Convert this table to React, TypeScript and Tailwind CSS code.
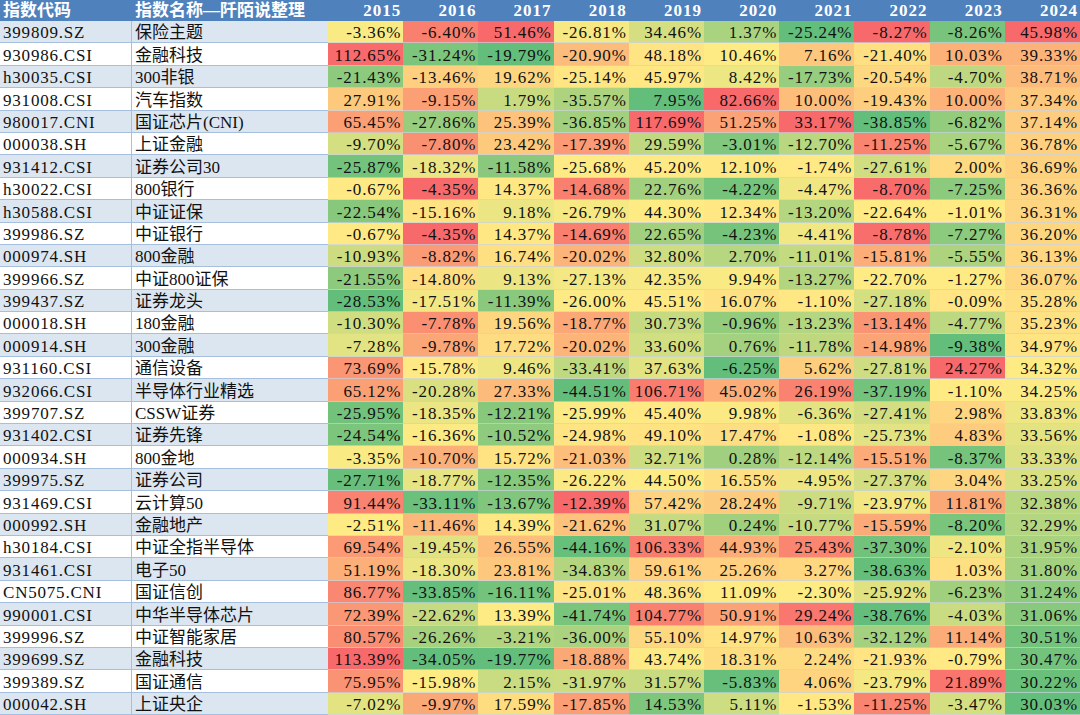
type Row = [string, string, number[]];

const years = [2015, 2016, 2017, 2018, 2019, 2020, 2021, 2022, 2023, 2024];

const rows: Row[] = [
  ["399809.SZ", "保险主题", [-3.36, -6.4, 51.46, -26.81, 34.46, 1.37, -25.24, -8.27, -8.26, 45.98]],
  ["930986.CSI", "金融科技", [112.65, -31.24, -19.79, -20.9, 48.18, 10.46, 7.16, -21.4, 10.03, 39.33]],
  ["h30035.CSI", "300非银", [-21.43, -13.46, 19.62, -25.14, 45.97, 8.42, -17.73, -20.54, -4.7, 38.71]],
  ["931008.CSI", "汽车指数", [27.91, -9.15, 1.79, -35.57, 7.95, 82.66, 10.0, -19.43, 10.0, 37.34]],
  ["980017.CNI", "国证芯片(CNI)", [65.45, -27.86, 25.39, -36.85, 117.69, 51.25, 33.17, -38.85, -6.82, 37.14]],
  ["000038.SH", "上证金融", [-9.7, -7.8, 23.42, -17.39, 29.59, -3.01, -12.7, -11.25, -5.67, 36.78]],
  ["931412.CSI", "证券公司30", [-25.87, -18.32, -11.58, -25.68, 45.2, 12.1, -1.74, -27.61, 2.0, 36.69]],
  ["h30022.CSI", "800银行", [-0.67, -4.35, 14.37, -14.68, 22.76, -4.22, -4.47, -8.7, -7.25, 36.36]],
  ["h30588.CSI", "中证证保", [-22.54, -15.16, 9.18, -26.79, 44.3, 12.34, -13.2, -22.64, -1.01, 36.31]],
  ["399986.SZ", "中证银行", [-0.67, -4.35, 14.37, -14.69, 22.65, -4.23, -4.41, -8.78, -7.27, 36.2]],
  ["000974.SH", "800金融", [-10.93, -8.82, 16.74, -20.02, 32.8, 2.7, -11.01, -15.81, -5.55, 36.13]],
  ["399966.SZ", "中证800证保", [-21.55, -14.8, 9.13, -27.13, 42.35, 9.94, -13.27, -22.7, -1.27, 36.07]],
  ["399437.SZ", "证券龙头", [-28.53, -17.51, -11.39, -26.0, 45.51, 16.07, -1.1, -27.18, -0.09, 35.28]],
  ["000018.SH", "180金融", [-10.3, -7.78, 19.56, -18.77, 30.73, -0.96, -13.23, -13.14, -4.77, 35.23]],
  ["000914.SH", "300金融", [-7.28, -9.78, 17.72, -20.02, 33.6, 0.76, -11.78, -14.98, -9.38, 34.97]],
  ["931160.CSI", "通信设备", [73.69, -15.78, 9.46, -33.41, 37.63, -6.25, 5.62, -27.81, 24.27, 34.32]],
  ["932066.CSI", "半导体行业精选", [65.12, -20.28, 27.33, -44.51, 106.71, 45.02, 26.19, -37.19, -1.1, 34.25]],
  ["399707.SZ", "CSSW证券", [-25.95, -18.35, -12.21, -25.99, 45.4, 9.98, -6.36, -27.41, 2.98, 33.83]],
  ["931402.CSI", "证券先锋", [-24.54, -16.36, -10.52, -24.98, 49.1, 17.47, -1.08, -25.73, 4.83, 33.56]],
  ["000934.SH", "800金地", [-3.35, -10.7, 15.72, -21.03, 32.71, 0.28, -12.14, -15.51, -8.37, 33.33]],
  ["399975.SZ", "证券公司", [-27.71, -18.77, -12.35, -26.22, 44.5, 16.55, -4.95, -27.37, 3.04, 33.25]],
  ["931469.CSI", "云计算50", [91.44, -33.11, -13.67, -12.39, 57.42, 28.24, -9.71, -23.97, 11.81, 32.38]],
  ["000992.SH", "金融地产", [-2.51, -11.46, 14.39, -21.62, 31.07, 0.24, -10.77, -15.59, -8.2, 32.29]],
  ["h30184.CSI", "中证全指半导体", [69.54, -19.45, 26.55, -44.16, 106.33, 44.93, 25.43, -37.3, -2.1, 31.95]],
  ["931461.CSI", "电子50", [51.19, -18.3, 23.81, -34.83, 59.61, 25.26, 3.27, -38.63, 1.03, 31.8]],
  ["CN5075.CNI", "国证信创", [86.77, -33.85, -16.11, -25.01, 48.36, 11.09, -2.3, -25.92, -6.23, 31.24]],
  ["990001.CSI", "中华半导体芯片", [72.39, -22.62, 13.39, -41.74, 104.77, 50.91, 29.24, -38.76, -4.03, 31.06]],
  ["399996.SZ", "中证智能家居", [80.57, -26.26, -3.21, -36.0, 55.1, 14.97, 10.63, -32.12, 11.14, 30.51]],
  ["399699.SZ", "金融科技", [113.39, -34.05, -19.77, -18.88, 43.74, 18.31, 2.24, -21.93, -0.79, 30.47]],
  ["399389.SZ", "国证通信", [75.95, -15.98, 2.15, -31.97, 31.57, -5.83, 4.06, -23.79, 21.89, 30.22]],
  ["000042.SH", "上证央企", [-7.02, -9.97, 17.59, -17.85, 14.53, 5.11, -1.53, -11.25, -3.47, 30.03]],
];

// excel-style 3 colour scale: min green, median yellow, max red
const GREEN = [99, 190, 123];
const YELLOW = [255, 235, 132];
const RED = [248, 105, 107];

const mix = (a: number[], b: number[], t: number) =>
  `rgb(${a.map((c, i) => Math.round(c + (b[i] - c) * t)).join(",")})`;

const scales = years.map((_, col) => {
  const vals = rows.map((r) => r[2][col]).sort((a, b) => a - b);
  const n = vals.length;
  const m = (n - 1) / 2;
  const mid = (vals[Math.floor(m)] + vals[Math.ceil(m)]) / 2;
  return { min: vals[0], mid, max: vals[n - 1] };
});

const cellColor = (v: number, col: number) => {
  const { min, mid, max } = scales[col];
  if (v <= mid) return mix(GREEN, YELLOW, (v - min) / (mid - min || 1));
  return mix(YELLOW, RED, (v - mid) / (max - mid || 1));
};

const App = () => {
  return (
    <div className="w-[1080px] h-[715px] overflow-hidden bg-white font-['Liberation_Serif','Noto_Sans_CJK_SC',serif] text-[17px] text-[#111]">
      <div className="grid grid-cols-[132px_196px_repeat(10,1fr)]">
        {/* header */}
        <div className="h-[21px] bg-[#4f81bd] text-white font-bold leading-[21px] pl-[3px]">指数代码</div>
        <div className="h-[21px] bg-[#4f81bd] text-white font-bold leading-[21px] pl-[3px] whitespace-nowrap">
          指数名称—阡陌说整理
        </div>
        {years.map((y) => (
          <div
            key={y}
            className="h-[21px] bg-[#4f81bd] text-white font-bold leading-[21px] text-right pr-[2px] tracking-[1px]"
          >
            {y}
          </div>
        ))}

        {rows.map(([code, name, vals], i) => {
          const band = i % 2 === 0 ? "bg-[#dce6f1]" : "bg-white";
          return (
            <div key={code + i} className="contents">
              <div
                className={`h-[22.4px] ${band} border-b border-r border-[#a7bfde] flex items-end pb-[1px] pl-[3px] leading-none whitespace-nowrap tracking-[0.8px]`}
              >
                {code}
              </div>
              <div
                className={`h-[22.4px] ${band} border-b border-[#a7bfde] flex items-end pb-[1px] pl-[3px] leading-none whitespace-nowrap`}
              >
                {name}
              </div>
              {vals.map((v, j) => (
                <div
                  key={j}
                  className="h-[22.4px] border-b border-[#c9d3e0]/70 flex items-end justify-end pb-[1px] pr-[2px] leading-none whitespace-nowrap tracking-[0.9px]"
                  style={{ backgroundColor: cellColor(v, j) }}
                >
                  {v.toFixed(2)}%
                </div>
              ))}
            </div>
          );
        })}
      </div>
    </div>
  );
};

export default App;
